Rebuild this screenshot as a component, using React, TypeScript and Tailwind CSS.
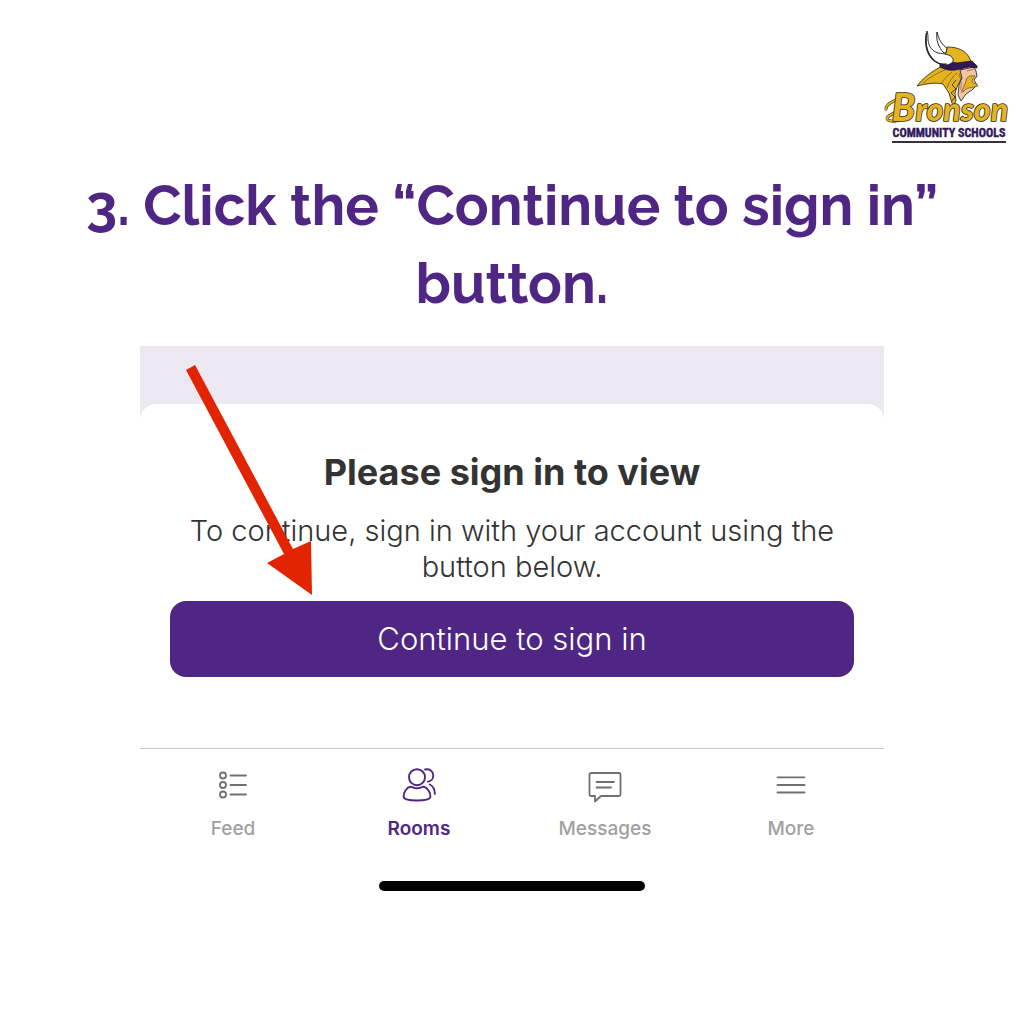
import React from 'react';

interface TabItem {
  label: string;
  icon: React.ReactNode;
  active?: boolean;
}

const FeedIcon = () => (
  <svg width="36" height="36" viewBox="0 0 36 36" fill="none" stroke="#707070" strokeWidth="1.8">
    <circle cx="8" cy="8.5" r="3" />
    <circle cx="8" cy="18" r="3" />
    <circle cx="8" cy="27.5" r="3" />
    <path d="M15.500 8.500h15.500M15.500 18h15.500M15.500 27.500h15.500" strokeLinecap="round" />
  </svg>
);

const RoomsIcon = () => (
  <svg width="36" height="36" viewBox="0 0 36 36" fill="none" stroke="#4f2683" strokeWidth="1.9" strokeLinecap="round">
    <circle cx="16" cy="10.2" r="8" />
    <path d="M9.500 19.800C5.200 20.600 2.600 25.500 2.600 29.500c0 2.600 5.500 4 13.400 4s13.400-1.400 13.400-4c0-4-2.600-8.900-6.900-9.700-1.600-.3-3 1.500-6.500 1.500s-4.900-1.800-6.500-1.500z" />
    <path d="M24 2.500c4.400-1.300 8.300 1.800 8.300 6 0 3.200-2.300 5.800-5.400 6.100" />
    <path d="M28.800 17.500c3.100 1.500 5 5.300 5.100 9.400" />
  </svg>
);

const MessagesIcon = () => (
  <svg width="36" height="36" viewBox="0 0 36 36" fill="none" stroke="#707070" strokeWidth="1.8" strokeLinejoin="round" strokeLinecap="round">
    <path d="M4 6h28a1.500 1.500 0 0 1 1.500 1.500v20a1.500 1.500 0 0 1-1.500 1.500H14L8 34.500V29H4a1.500 1.500 0 0 1-1.500-1.500v-20A1.500 1.500 0 0 1 4 6z" />
    <path d="M9.500 15h17.500M9.500 20.500h14.500" />
  </svg>
);

const MoreIcon = () => (
  <svg width="36" height="36" viewBox="0 0 36 36" fill="none" stroke="#707070" strokeWidth="1.8" strokeLinecap="round">
    <path d="M4.500 10.300h27M4.500 18h27M4.500 25.500h27" />
  </svg>
);

const tabs: TabItem[] = [
  { label: 'Feed', icon: <FeedIcon /> },
  { label: 'Rooms', icon: <RoomsIcon />, active: true },
  { label: 'Messages', icon: <MessagesIcon /> },
  { label: 'More', icon: <MoreIcon /> },
];

const SchoolLogo = () => (
  <svg width="144" height="130" viewBox="0 0 144 130" role="img" aria-label="Bronson Community Schools">
    {/* Hair and braid */}
    <path d="M43 66C49 58 57 52 68 46l20 3-1 10-4 8-2 6 1 8-3 5-2-6-2-7-6-9c-8-2-18 0-26 2z" fill="#e4b320" stroke="#3b3118" strokeWidth="0.9" />
    <path d="M49 63c7-6 14-10 22-13M67 64c3-5 6-8 11-12M73 68c2-6 5-11 10-15" fill="none" stroke="#5a4512" strokeWidth="0.6" />
    <path d="M82 60l-4 5 4 4-5 4 4 4-3 4" fill="none" stroke="#3b3118" strokeWidth="0.9" />

    {/* Face */}
    <path d="M86 50l14-3 2 4 1 5-3 4 3 5-5 5-6 4-5 7-3-6 1-10 3-7z" fill="#f2c4a6" stroke="#332c26" strokeWidth="0.9" />
    <path d="M87 52c-3 3-2 6 1 7M93 51l7-2M88 62c-2 5-1 8 0 11" fill="none" stroke="#80533e" strokeWidth="0.7" />
    <path d="M101 56c-6-1-9 2-9 5l-2 5c-1 2-2 4-1 6 4-5 8-4 11-5l4-1c-1-3-4-2-6-4 0-3 2-4 3-6z" fill="#e4b320" stroke="#49370c" strokeWidth="0.6" />

    {/* Helmet */}
    <path d="M73 27c10 0 18 3 22 10l3 7-16 1-8-6-3-4z" fill="#e4b320" stroke="#3b3118" strokeWidth="0.9" />
    <path d="M66 44c6 1 11-3 17-1l15-2 5 5v2l-8-1-9 2-5 1c-6 1-11-1-15-3z" fill="#321858" stroke="#1c1228" strokeWidth="0.8" />

    {/* Horns */}
    <path d="M53 11c1 3 1 5 1 9 1 7 4 11 10 13 6 1 13 1 15 6 1 3-2 5-6 6-6 1-12-3-16-8-5-6-6-16-4-26z" fill="#fff" stroke="#25202a" strokeWidth="0.9" />
    <path d="M52.500 13c-2 12 0 21 8 28 4 3 8 4 12 3" fill="none" stroke="#25202a" strokeWidth="1.5" />
    <path d="M63 12c-1 8 1 15 7 21h2l1-5c-5-3-8-8-10-16z" fill="#fff" stroke="#25202a" strokeWidth="1" />

    {/* Wordmark */}
    <path d="M25 79c-7 2-13 6-13 10M24 92c-8 2-13 6-10 8 5 3 14 0 20-4" fill="none" stroke="#302719" strokeWidth="3" strokeLinecap="round" />
    <path d="M25 79c-7 2-13 6-13 10M24 92c-8 2-13 6-10 8 5 3 14 0 20-4" fill="none" stroke="#e4b320" strokeWidth="2" strokeLinecap="round" />
    <text x="76" y="101" textAnchor="middle" fill="#e4b320" stroke="#302719" strokeWidth="1.6" paintOrder="stroke" strokeLinejoin="round" className="font-['Lato',sans-serif] text-[32px] font-black italic">
      <tspan className="text-[38px]">B</tspan>ronson
    </text>
    <text x="75" y="117" textAnchor="middle" fill="#321858" stroke="#321858" strokeWidth="0.4" className="font-['Roboto_Condensed','Liberation_Sans_Narrow',sans-serif] text-[12px] font-bold">
      COMMUNITY SCHOOLS
    </text>
    <rect x="18" y="121" width="114" height="2" fill="#38313d" />
  </svg>
);

export default function App() {
  return (
    <div className="min-h-screen bg-white font-['Inter',sans-serif]">
      <header className="flex justify-end pt-5 pr-1.5">
        <SchoolLogo />
      </header>

      <main className="px-8 pt-4">
        <h1 className="mx-auto max-w-[900px] text-center font-['Raleway','Lato',sans-serif] text-[56px] leading-[78px] font-bold text-[#4f2683]">
          3. Click the “Continue to sign in” button.
        </h1>

        <div className="relative mx-auto mt-6 max-w-[744px] bg-[#ebe8f1] pt-[58px]">
          <section className="rounded-t-2xl bg-white px-5 pt-11 pb-[71px] text-center">
            <h2 className="text-[36px] leading-[48px] font-bold text-[#333]">Please sign in to view</h2>
            <p className="pt-[17px] text-[29px] leading-9 font-light text-[#333]">
              To continue, sign in with your account using the button below.
            </p>
            <div className="px-2.5 pt-4">
              <button type="button" className="h-[76px] w-full rounded-2xl bg-[#4f2683] text-[31px] font-light text-white">
                Continue to sign in
              </button>
            </div>
          </section>

          {/* Arrow pointing at the sign in button */}
          <svg className="pointer-events-none absolute top-0 left-0" width="200" height="260" viewBox="0 0 200 260" aria-hidden="true">
            <path d="M46 24L55 19L153 203L171 195L172 249L127 217L144 208z" fill="#e32400" />
          </svg>
        </div>

        <nav className="mx-auto grid max-w-[744px] grid-cols-4 border-t border-[#c8c8c8] bg-white pt-[18px]">
          {tabs.map((tab) => (
            <a
              key={tab.label}
              href={`#${tab.label.toLowerCase()}`}
              className={`flex flex-col items-center gap-3.5 text-[19px] leading-6 ${
                tab.active ? 'font-semibold text-[#4f2683]' : 'font-medium text-[#a0a0a0]'
              }`}
            >
              {tab.icon}
              {tab.label}
            </a>
          ))}
        </nav>

        <div className="mx-auto mt-10 h-2.5 w-[266px] rounded-full bg-black" />
      </main>
    </div>
  );
}
